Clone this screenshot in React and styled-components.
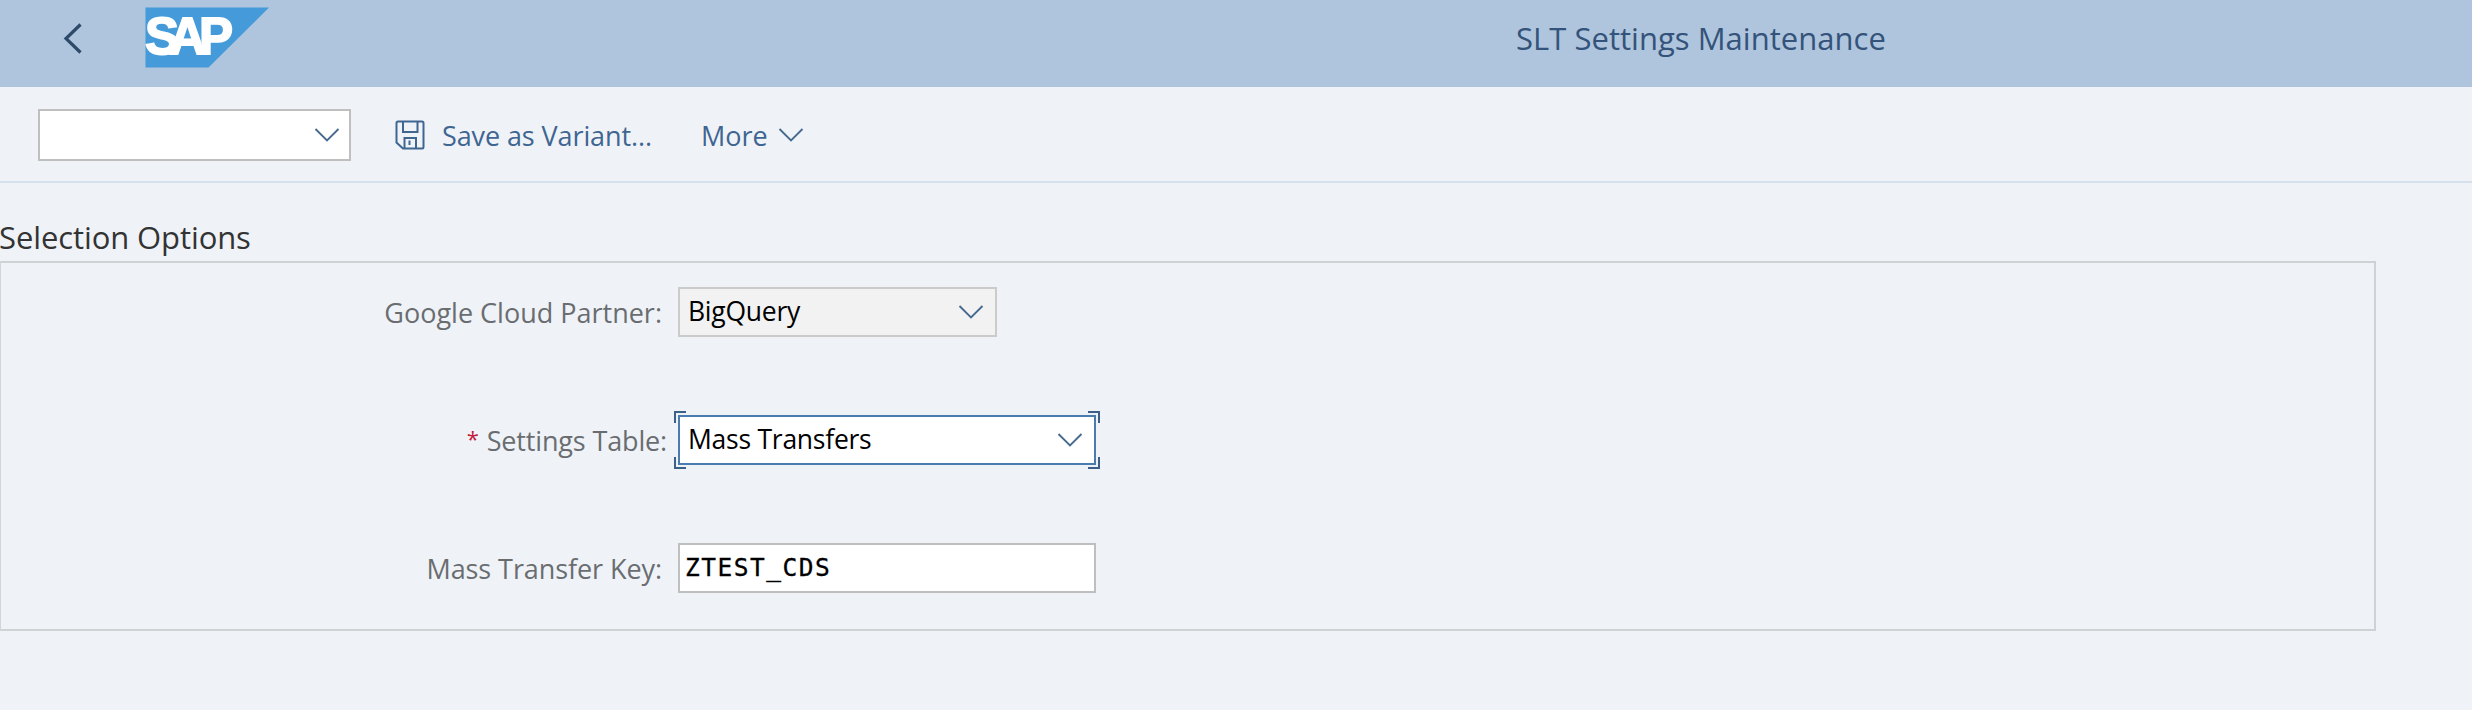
import React from "react";
import styled, { createGlobalStyle } from "styled-components";

const GlobalStyle = createGlobalStyle`
  *, *::before, *::after { box-sizing: border-box; }
  body {
    margin: 0;
    background: #eff3f8;
    font-family: "Open Sans", "Noto Sans", sans-serif;
    font-size: 27px;
  }
  svg { display: block; flex: none; }
`;

const Page = styled.div`
  display: flex;
  flex-direction: column;
  min-height: 710px;
  overflow: hidden;
`;

const ShellBar = styled.header`
  display: grid;
  grid-template-columns: 145px 1371px 1fr;
  align-items: start;
  height: 87px;
  padding-top: 7px;
  background: #afc5dd;
  color: #34537a;
`;

const BackButton = styled.button`
  margin: 15px 0 0 62px;
  width: 22px;
  padding: 0;
  border: 0;
  background: none;
`;

const Title = styled.h1`
  margin: 11px 0 0;
  font-size: 31px;
  font-weight: 400;
  line-height: 40px;
  letter-spacing: 0.03px;
  white-space: nowrap;
`;

const Toolbar = styled.div`
  display: flex;
  align-items: flex-start;
  height: 96px;
  padding: 22px 0 0 38px;
  border-bottom: 2px solid #d6e0ed;
`;

const ToolButton = styled.button`
  display: flex;
  align-items: center;
  height: 52px;
  margin-left: ${(p) => p.$offset}px;
  padding: 0;
  border: 0;
  background: none;
  color: #3f6591;
  font: inherit;
  letter-spacing: ${(p) => p.$tracking || 0}px;
  white-space: nowrap;
`;

const ToolText = styled.span`
  margin-left: ${(p) => p.$left || 0}px;
  margin-right: ${(p) => p.$right || 0}px;
`;

const SectionTitle = styled.h2`
  margin: 34px 0 4px -1px;
  height: 40px;
  font-size: 31px;
  font-weight: 400;
  line-height: 40px;
  letter-spacing: -0.1px;
  color: #333;
`;

const Panel = styled.section`
  display: flex;
  flex-direction: column;
  gap: 78px;
  width: 2376px;
  height: 370px;
  padding-top: 24px;
  border: 2px solid #cfd1d3;
  border-left: 1px solid #d3d5d6;
`;

const FieldRow = styled.div`
  display: flex;
  height: 50px;
`;

const Label = styled.label`
  width: ${(p) => p.$width}px;
  margin-right: ${(p) => 677 - p.$width}px;
  text-align: right;
  line-height: 52px;
  letter-spacing: ${(p) => p.$tracking || 0}px;
  color: #6a6d70;
  white-space: nowrap;
`;

const Required = styled.span`
  margin-right: 8px;
  font-size: 22px;
  vertical-align: 4px;
  line-height: 1;
  color: #c4183c;
`;

const borders = { normal: "#bfbfbf", readonly: "#cbcbcb", focus: "#4a7caf" };

const Field = styled.div`
  position: relative;
  display: flex;
  align-items: center;
  justify-content: space-between;
  width: ${(p) => p.$width}px;
  height: ${(p) => p.$height || 50}px;
  padding: 0 ${(p) => p.$right || 11}px 0 8px;
  border: 2px solid ${(p) => borders[p.$state || "normal"]};
  background: ${(p) => (p.$state === "readonly" ? "#f2f2f2" : "#fff")};
  color: #000;
`;

const Value = styled.span`
  font-size: 26.5px;
  line-height: 42px;
  margin-top: -3px;
  letter-spacing: -0.25px;
  white-space: nowrap;
`;

const KeyValue = styled.span`
  font-family: "DejaVu Sans Mono", monospace;
  font-size: 24.5px;
  line-height: 42px;
  letter-spacing: 1.5px;
  margin: -1px 0 0 -3px;
  -webkit-text-stroke: 0.3px #000;
`;

const Corner = styled.i`
  position: absolute;
  width: 12px;
  height: 12px;
  border: 0 solid #3d6088;
  ${(p) => p.$y}: -6px;
  ${(p) => p.$x}: -6px;
  border-${(p) => p.$y}-width: 2px;
  border-${(p) => p.$x}-width: 2px;
`;

const Chevron = () => (
  <svg width="26" height="16" viewBox="0 0 26 16" fill="none" stroke="#46698f" strokeWidth="1.9">
    <path d="M1.5 2 L13 13.5 L24.5 2" />
  </svg>
);

const BackIcon = () => (
  <svg width="22" height="34" viewBox="0 0 22 34" fill="none" stroke="#2d4a6b" strokeWidth="3.2">
    <path d="M18.5 2.5 L4 16.5 L18.5 30.5" />
  </svg>
);

const SaveIcon = () => (
  <svg width="30" height="30" viewBox="0 0 30 30" fill="none" stroke="#3f6591" strokeWidth="2">
    <path d="M3 1.5 H27 Q28.5 1.5 28.5 3 V27 Q28.5 28.5 27 28.5 H8 L1.5 22.5 V3 Q1.5 1.5 3 1.5 Z" />
    <path d="M8 1.5 V12 H22.5 V1.5" />
    <path d="M9.5 28.5 V18 H21 V28.5" />
    <path d="M14.5 20.5 V25" />
  </svg>
);

const Logo = () => (
  <svg width="125" height="61" viewBox="0 0 125 61">
    <path d="M0.5 0.5 H124 L63.5 60.5 H0.5 Z" fill="#459bd9" />
    <text
      y="47"
      x="0 24 54"
      fill="#fff"
      stroke="#fff"
      strokeWidth="1.8"
      fontFamily="Liberation Sans, sans-serif"
      fontWeight="700"
      fontSize="51"
    >
      SAP
    </text>
  </svg>
);

export default function App() {
  return (
    <Page>
      <GlobalStyle />
      <ShellBar>
        <BackButton aria-label="Back"><BackIcon /></BackButton>
        <Logo />
        <Title>SLT Settings Maintenance</Title>
      </ShellBar>
      <Toolbar>
        <Field $width={313} $height={52} $right={9}>
          <span />
          <Chevron />
        </Field>
        <ToolButton $offset={44} $tracking={-0.1}>
          <SaveIcon />
          <ToolText $left={17}>Save as Variant...</ToolText>
        </ToolButton>
        <ToolButton $offset={49}>
          <ToolText $right={10}>More</ToolText>
          <Chevron />
        </ToolButton>
      </Toolbar>
      <SectionTitle>Selection Options</SectionTitle>
      <Panel>
        <FieldRow>
          <Label $width={661}>Google Cloud Partner:</Label>
          <Field $width={319} $state="readonly">
            <Value>BigQuery</Value>
            <Chevron />
          </Field>
        </FieldRow>
        <FieldRow>
          <Label $width={666} $tracking={-0.15}>
            <Required>*</Required>Settings Table:
          </Label>
          <Field $width={418} $state="focus">
            <Value>Mass Transfers</Value>
            <Chevron />
            <Corner $y="top" $x="left" />
            <Corner $y="top" $x="right" />
            <Corner $y="bottom" $x="left" />
            <Corner $y="bottom" $x="right" />
          </Field>
        </FieldRow>
        <FieldRow>
          <Label $width={661} $tracking={-0.08}>Mass Transfer Key:</Label>
          <Field $width={418}>
            <KeyValue>ZTEST_CDS</KeyValue>
          </Field>
        </FieldRow>
      </Panel>
    </Page>
  );
}
